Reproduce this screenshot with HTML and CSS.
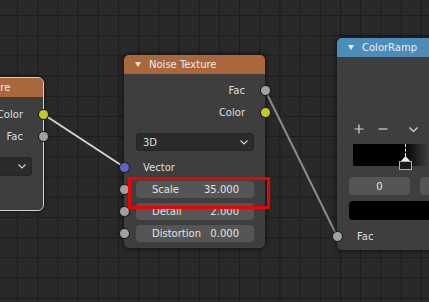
FILE: index.html
```html
<!DOCTYPE html>
<html>
<head>
<meta charset="utf-8">
<link rel="stylesheet" href="styles.css">
</head>
<body>
<div class="canvas">
  <svg class="links" width="429" height="302" viewBox="0 0 429 302">
    <line class="link link-sel" x1="43" y1="114" x2="124" y2="167"/>
    <line class="link" x1="265" y1="90" x2="337" y2="236"/>
  </svg>

  <div class="node node-gradient selected">
    <div class="header header-tex">
      <svg class="tri" width="6" height="5" viewBox="0 0 6 5"><polygon points="0,0 6,0 3,5"/></svg>
      <span class="title">Gradient Texture</span>
    </div>
    <div class="body body-gradient">
      <div class="row out">Color<i class="sock sock-yellow sock-r"></i></div>
      <div class="row out">Fac<i class="sock sock-grey sock-r"></i></div>
      <div class="dropdown dd-gradient"><span>Linear</span><svg class="chev" width="8" height="5" viewBox="0 0 8 5"><polyline points="0.5,0.5 4,4 7.5,0.5"/></svg></div>
      <div class="row in">Vector<i class="sock sock-blue sock-l"></i></div>
    </div>
  </div>

  <div class="node node-noise">
    <div class="header header-tex">
      <svg class="tri" width="6" height="5" viewBox="0 0 6 5"><polygon points="0,0 6,0 3,5"/></svg>
      <span class="title">Noise Texture</span>
    </div>
    <div class="body body-noise">
      <div class="row out">Fac<i class="sock sock-grey sock-r"></i></div>
      <div class="row out">Color<i class="sock sock-yellow sock-r"></i></div>
      <div class="dropdown dd-noise"><span>3D</span><svg class="chev" width="8" height="5" viewBox="0 0 8 5"><polyline points="0.5,0.5 4,4 7.5,0.5"/></svg></div>
      <div class="row in">Vector<i class="sock sock-blue sock-l"></i></div>
      <div class="field-row first"><div class="field"><span>Scale</span><span>35.000</span></div><i class="sock sock-grey sock-l"></i></div>
      <div class="field-row"><div class="field"><span>Detail</span><span>2.000</span></div><i class="sock sock-grey sock-l"></i></div>
      <div class="field-row"><div class="field"><span>Distortion</span><span>0.000</span></div><i class="sock sock-grey sock-l"></i></div>
    </div>
  </div>

  <div class="node node-ramp">
    <div class="header header-conv">
      <svg class="tri" width="6" height="5" viewBox="0 0 6 5"><polygon points="0,0 6,0 3,5"/></svg>
      <span class="title">ColorRamp</span>
    </div>
    <div class="body body-ramp">
      <div class="row out"></div>
      <div class="row out"></div>
      <div class="tools">
        <span class="tool"><svg width="10" height="10" viewBox="0 0 10 10"><path d="M5 0.5V9.5M0.5 5H9.5"/></svg></span>
        <span class="tool tool-minus"><svg width="10" height="10" viewBox="0 0 10 10"><path d="M0.5 5H9.5"/></svg></span>
        <span class="tool tool-chev"><svg width="9" height="5" viewBox="0 0 9 5"><polyline points="0.5,0.5 4.5,4.5 8.5,0.5"/></svg></span>
      </div>
      <div class="ramp">
        <div class="stop">
          <div class="stop-line"></div>
          <svg class="stop-arrow" width="9" height="5" viewBox="0 0 9 5"><polygon points="4.5,0 9,5 0,5"/></svg>
          <div class="stop-box"></div>
        </div>
      </div>
      <div class="ramp-fields">
        <div class="field field-center">0</div>
        <div class="field field-pos">Pos</div>
      </div>
      <div class="swatch"></div>
      <div class="row in">Fac<i class="sock sock-grey sock-l"></i></div>
    </div>
  </div>

  <div class="highlight"></div>
</div>
</body>
</html>
```

FILE: styles.css
```css
* { box-sizing: border-box; }
html, body { margin: 0; padding: 0; background: #282828; }
.canvas {
  position: relative;
  width: 429px;
  height: 302px;
  overflow: hidden;
  background-color: #292929;
  background-image:
    linear-gradient(to right, #1c1c1c 1px, transparent 1px),
    linear-gradient(to bottom, #1c1c1c 1px, transparent 1px);
  background-size: 20.2px 20.2px;
  background-position: 17px 15px;
  font-family: "DejaVu Sans", sans-serif;
  font-size: 10px;
  color: #dedede;
}
.links { position: absolute; left: 0; top: 0; }
.link { stroke: #8a8a8a; stroke-width: 2; stroke-linecap: round; }
.link-sel { stroke: #d2d2d2; }

.node {
  position: absolute;
  width: 141px;
  background: #3e3e3e;
  border-radius: 5px;
  box-shadow: 0 0 5px 1px rgba(0,0,0,0.55);
}
.node.selected { outline: 1px solid #cfcfcf; outline-offset: 0; }
.node-gradient { left: -98px; top: 78px; }
.node-noise { left: 124px; top: 55px; }
.node-ramp { left: 337px; top: 38px; width: 240px; }

.header {
  height: 19px;
  border-radius: 5px 5px 0 0;
  display: flex;
  align-items: center;
  padding-left: 11px;
  color: #ececec;
  font-size: 10px;
}
.header-tex { background: #aa673b; }
.header-conv { background: #4c8cb9; }
.tri { fill: #e8e8e8; margin-right: 8px; }
.title { white-space: nowrap; }

.body { display: flex; flex-direction: column; }
.body-gradient { padding: 6px 0 10px; }
.body-noise { padding: 5px 0 6px; }
.body-ramp { padding: 5px 0 3px; }

.row {
  position: relative;
  height: 22px;
  display: flex;
  align-items: center;
  white-space: nowrap;
}
.row.out { justify-content: flex-end; padding-right: 20px; }
.row.in { padding-left: 19px; }
.body-gradient .row.in { margin-top: 2px; }
.body-noise .row.in { margin-top: 5px; }
.body-ramp .row.in { margin-top: 5px; padding-left: 20px; }

.sock {
  position: absolute;
  width: 9px;
  height: 9px;
  border-radius: 50%;
  top: 50%;
  margin-top: -4.5px;
  box-shadow: 0 0 0 1px #1e1e1e;
}
.sock-r { right: -4.5px; }
.sock-l { left: -4.5px; }
.sock-yellow { background: #c7c729; }
.sock-grey { background: #a1a1a1; }
.sock-blue { background: #6363c7; }

.dropdown {
  height: 18px;
  margin: 10px 11px 0 12px;
  background: #2b2b2b;
  border-radius: 4px;
  display: flex;
  align-items: center;
  justify-content: space-between;
  padding: 0 6px 0 7px;
  box-shadow: inset 0 0 0 1px #262626;
}
.dd-gradient { height: 19px; }
.chev { fill: none; stroke: #cfcfcf; stroke-width: 1.2; }

.field-row { position: relative; margin-top: 5px; }
.field-row.first { margin-top: 3px; }
.field {
  height: 17px;
  margin: 0 11px 0 12px;
  background: #555555;
  border-radius: 4px;
  display: flex;
  align-items: center;
  justify-content: space-between;
  padding: 0 15px 0 16px;
  color: #e2e2e2;
  white-space: nowrap;
}
.field-row .sock { top: 50%; }

.tools {
  height: 18px;
  margin-top: 14px;
  display: flex;
  align-items: center;
  padding-left: 12px;
}
.tool {
  width: 20px;
  height: 18px;
  display: flex;
  align-items: center;
  justify-content: center;
}
.tool svg { fill: none; stroke: #d8d8d8; stroke-width: 1.2; }
.tool-minus { margin-left: 4px; }
.tool-chev { margin-left: 10px; }

.ramp {
  position: relative;
  height: 22px;
  margin: 6px 0 0 16px;
  width: 212px;
  background: linear-gradient(90deg, #000 0, #000 51px, #fff 150px, #fff 100%);
}
.stop { position: absolute; left: 46px; top: 0; width: 13px; height: 26px; }
.stop-line {
  position: absolute;
  left: 6px;
  top: 0;
  height: 12px;
  border-left: 1px dashed #ffffff;
}
.stop-arrow { position: absolute; left: 2px; top: 12px; fill: #f0f0f0; }
.stop-box {
  position: absolute;
  left: 0;
  top: 17px;
  width: 13px;
  height: 9px;
  background: #1a1a1a;
  border: 1px solid #b0b0b0;
}

.ramp-fields { display: flex; margin: 11px 0 0 12px; gap: 10px; }
.ramp-fields .field { margin: 0; height: 18px; padding: 0; justify-content: center; }
.field-center { width: 61px; }
.field-pos { width: 140px; }

.swatch {
  height: 19px;
  margin: 6px 11px 0 12px;
  background: #000;
  border-radius: 4px;
}

.highlight {
  position: absolute;
  left: 128px;
  top: 177px;
  width: 142px;
  height: 32px;
  border: 3px solid #ee0000;
}
```
